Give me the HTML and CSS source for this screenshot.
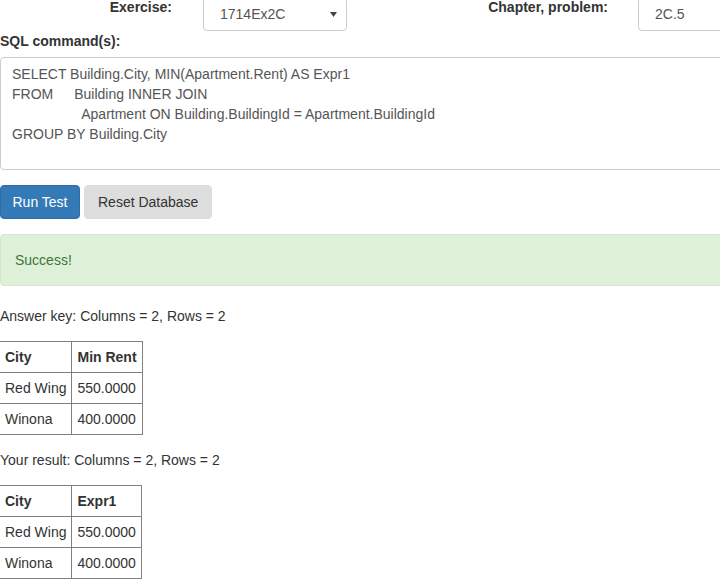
FILE: index.html
```html
<!DOCTYPE html>
<html>
<head>
<meta charset="utf-8">
<link rel="stylesheet" href="styles.css">
</head>
<body>
<div class="page">
  <div class="top-row">
    <label class="lbl lbl-exercise">Exercise:</label>
    <div class="select">
      <span>1714Ex2C</span>
      <svg class="caret" width="7" height="5" viewBox="0 0 7 5"><path d="M0 0H7L3.5 5Z" fill="#444"/></svg>
    </div>
    <label class="lbl lbl-chapter">Chapter, problem:</label>
    <div class="input">2C.5</div>
  </div>
  <label class="lbl sql-label">SQL command(s):</label>
  <div class="sql-box">SELECT Building.City, MIN(Apartment.Rent) AS Expr1
FROM	Building INNER JOIN
		  Apartment ON Building.BuildingId = Apartment.BuildingId
GROUP BY Building.City</div>
  <div class="buttons">
    <button class="btn btn-primary">Run Test</button>
    <button class="btn btn-gray">Reset Database</button>
  </div>
  <div class="alert">Success!</div>
  <p class="summary">Answer key: Columns = 2, Rows = 2</p>
  <table class="result">
    <tr><th>City</th><th>Min Rent</th></tr>
    <tr><td>Red Wing</td><td>550.0000</td></tr>
    <tr><td>Winona</td><td>400.0000</td></tr>
  </table>
  <p class="summary summary-second">Your result: Columns = 2, Rows = 2</p>
  <table class="result">
    <tr><th>City</th><th>Expr1</th></tr>
    <tr><td>Red Wing</td><td>550.0000</td></tr>
    <tr><td>Winona</td><td>400.0000</td></tr>
  </table>
</div>
</body>
</html>
```

FILE: styles.css
```css
html, body {
  margin: 0;
  padding: 0;
  overflow: hidden;
  background: #fff;
}
body {
  font-family: "Liberation Sans", Arial, sans-serif;
  font-size: 14px;
  line-height: 20px;
  color: #333;
}
.page {
  width: 780px;
}
.top-row {
  display: flex;
  align-items: flex-start;
  margin-top: -3px;
  height: 34px;
}
.lbl {
  font-weight: bold;
  display: block;
}
.lbl-exercise {
  width: 172px;
  text-align: right;
  margin-right: 31px;
}
.select {
  box-sizing: border-box;
  width: 144px;
  height: 34px;
  border: 1px solid #ccc;
  border-radius: 4px;
  padding: 6px 9px 6px 16px;
  color: #555;
  display: flex;
  align-items: center;
  justify-content: space-between;
}
.caret {
  display: block;
  margin-top: 1px;
}
.lbl-chapter {
  width: 261px;
  text-align: right;
  margin-right: 30px;
}
.input {
  box-sizing: border-box;
  width: 140px;
  height: 34px;
  border: 1px solid #ccc;
  border-radius: 4px;
  padding: 6px 16px;
  color: #555;
}
.sql-label {
  margin-bottom: 6px;
}
.sql-box {
  box-sizing: border-box;
  height: 113px;
  border: 1px solid #ccc;
  border-radius: 4px;
  padding: 6px 12px 6px 11px;
  color: #555;
  white-space: pre;
  tab-size: 8;
  -moz-tab-size: 8;
}
.buttons {
  display: flex;
  gap: 4px;
  margin-top: 15px;
}
.btn {
  font-family: inherit;
  font-size: 14px;
  line-height: 20px;
  height: 34px;
  padding: 6px 12px;
  border-radius: 4px;
  border: 1px solid transparent;
  cursor: pointer;
}
.btn-primary {
  padding: 6px 11.5px;
  background: #337ab7;
  border-color: #2e6da4;
  color: #fff;
}
.btn-gray {
  padding: 6px 13px;
  background: #ddd;
  border-color: #ddd;
  color: #333;
}
.alert {
  margin-top: 15px;
  margin-bottom: 20px;
  padding: 15px 15px 15px 14px;
  border: 1px solid #d6e9c6;
  border-radius: 4px;
  background: #dff0d8;
  color: #3c763d;
}
.summary {
  margin: 0 0 15px;
}
.result {
  border-collapse: collapse;
  margin-left: -1px;
  margin-bottom: 15px;
}
.result th,
.result td {
  border: 1px solid #808080;
  padding: 5px;
  text-align: left;
  line-height: 20px;
}
.result th {
  font-weight: bold;
}
```
